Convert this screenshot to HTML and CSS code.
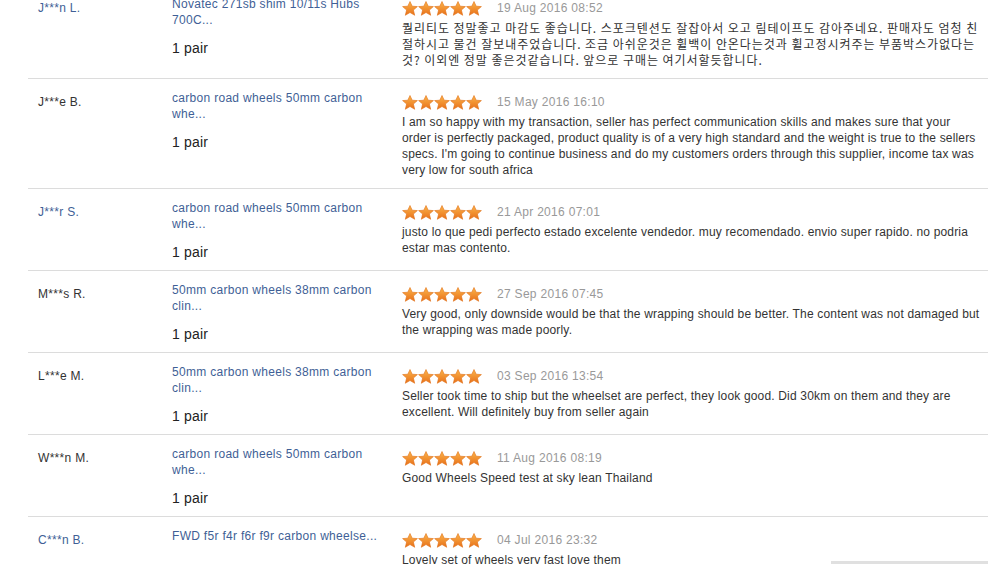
FILE: index.html
```html
<!DOCTYPE html>
<html>
<head>
<meta charset="utf-8">
<link rel="stylesheet" href="styles.css">
</head>
<body>
<svg width="0" height="0" class="defs">
  <defs>
    <linearGradient id="sg" x1="0" y1="0" x2="0" y2="1">
      <stop offset="0" stop-color="#fbb54a"/>
      <stop offset="1" stop-color="#e8701a"/>
    </linearGradient>
    <symbol id="star" viewBox="0 0 16 15">
      <polygon points="8,0.5 10.2,5.2 15.4,5.6 11.4,9 12.7,14.3 8,11.5 3.3,14.3 4.6,9 0.6,5.6 5.8,5.2" fill="url(#sg)" stroke="#e07018" stroke-width="0.6"/>
    </symbol>
  </defs>
</svg>
<div class="feedback">
  <div class="row first">
    <div class="buyer blue">J***n L.</div>
    <div class="product"><a class="plink">Novatec 271sb shim 10/11s Hubs 700C...</a><div class="qty">1 pair</div></div>
    <div class="review">
      <div class="meta"><span class="stars"><svg><use href="#star"/></svg><svg><use href="#star"/></svg><svg><use href="#star"/></svg><svg><use href="#star"/></svg><svg><use href="#star"/></svg></span><span class="date">19 Aug 2016 08:52</span></div>
      <p class="text ko">퀄리티도 정말좋고 마감도 좋습니다. 스포크텐션도 잘잡아서 오고 림테이프도 감아주네요. 판매자도 엄청 친절하시고 물건 잘보내주었습니다. 조금 아쉬운것은 휠백이 안온다는것과 휠고정시켜주는 부품박스가없다는것? 이외엔 정말 좋은것같습니다. 앞으로 구매는 여기서할듯합니다.</p>
    </div>
  </div>
  <div class="row">
    <div class="buyer">J***e B.</div>
    <div class="product"><a class="plink">carbon road wheels 50mm carbon whe...</a><div class="qty">1 pair</div></div>
    <div class="review">
      <div class="meta"><span class="stars"><svg><use href="#star"/></svg><svg><use href="#star"/></svg><svg><use href="#star"/></svg><svg><use href="#star"/></svg><svg><use href="#star"/></svg></span><span class="date">15 May 2016 16:10</span></div>
      <p class="text">I am so happy with my transaction, seller has perfect communication skills and makes sure that your order is perfectly packaged, product quality is of a very high standard and the weight is true to the sellers specs. I'm going to continue business and do my customers orders through this supplier, income tax was very low for south africa</p>
    </div>
  </div>
  <div class="row">
    <div class="buyer blue">J***r S.</div>
    <div class="product"><a class="plink">carbon road wheels 50mm carbon whe...</a><div class="qty">1 pair</div></div>
    <div class="review">
      <div class="meta"><span class="stars"><svg><use href="#star"/></svg><svg><use href="#star"/></svg><svg><use href="#star"/></svg><svg><use href="#star"/></svg><svg><use href="#star"/></svg></span><span class="date">21 Apr 2016 07:01</span></div>
      <p class="text">justo lo que pedi perfecto estado excelente vendedor. muy recomendado. envio super rapido. no podria estar mas contento.</p>
    </div>
  </div>
  <div class="row">
    <div class="buyer">M***s R.</div>
    <div class="product"><a class="plink">50mm carbon wheels 38mm carbon clin...</a><div class="qty">1 pair</div></div>
    <div class="review">
      <div class="meta"><span class="stars"><svg><use href="#star"/></svg><svg><use href="#star"/></svg><svg><use href="#star"/></svg><svg><use href="#star"/></svg><svg><use href="#star"/></svg></span><span class="date">27 Sep 2016 07:45</span></div>
      <p class="text">Very good, only downside would be that the wrapping should be better. The content was not damaged but the wrapping was made poorly.</p>
    </div>
  </div>
  <div class="row">
    <div class="buyer">L***e M.</div>
    <div class="product"><a class="plink">50mm carbon wheels 38mm carbon clin...</a><div class="qty">1 pair</div></div>
    <div class="review">
      <div class="meta"><span class="stars"><svg><use href="#star"/></svg><svg><use href="#star"/></svg><svg><use href="#star"/></svg><svg><use href="#star"/></svg><svg><use href="#star"/></svg></span><span class="date">03 Sep 2016 13:54</span></div>
      <p class="text">Seller took time to ship but the wheelset are perfect, they look good. Did 30km on them and they are excellent. Will definitely buy from seller again</p>
    </div>
  </div>
  <div class="row">
    <div class="buyer">W***n M.</div>
    <div class="product"><a class="plink">carbon road wheels 50mm carbon whe...</a><div class="qty">1 pair</div></div>
    <div class="review">
      <div class="meta"><span class="stars"><svg><use href="#star"/></svg><svg><use href="#star"/></svg><svg><use href="#star"/></svg><svg><use href="#star"/></svg><svg><use href="#star"/></svg></span><span class="date">11 Aug 2016 08:19</span></div>
      <p class="text">Good Wheels Speed test at sky lean Thailand</p>
    </div>
  </div>
  <div class="row">
    <div class="buyer blue">C***n B.</div>
    <div class="product"><a class="plink">FWD f5r f4r f6r f9r carbon wheelse...</a><div class="qty">1 pair</div></div>
    <div class="review">
      <div class="meta"><span class="stars"><svg><use href="#star"/></svg><svg><use href="#star"/></svg><svg><use href="#star"/></svg><svg><use href="#star"/></svg><svg><use href="#star"/></svg></span><span class="date">04 Jul 2016 23:32</span></div>
      <p class="text">Lovely set of wheels very fast love them</p>
    </div>
  </div>
</div>
<div class="floatbar"></div>
</body>
</html>
```
FILE: styles.css
```css
html, body {
  margin: 0;
  padding: 0;
  background: #fff;
  overflow: hidden;
}
body {
  width: 996px;
  height: 564px;
  position: relative;
  font-family: "Liberation Sans", Arial, "Noto Sans CJK KR", sans-serif;
  font-size: 12px;
  letter-spacing: 0.3px;
  color: #333;
}
.defs {
  position: absolute;
  width: 0;
  height: 0;
}
.feedback {
  margin: -15px 0 0 28px;
  width: 960px;
  height: 579px;
  overflow: hidden;
}
.row {
  display: flex;
  border-bottom: 1px solid #dcdcdc;
  padding-bottom: 9px;
}
.buyer {
  width: 134px;
  padding: 15px 0 0 10px;
  line-height: 16px;
  color: #333;
  box-sizing: border-box;
  flex: none;
}
.buyer.blue {
  color: #3f5f96;
}
.product {
  width: 240px;
  padding: 11px 0 0 10px;
  box-sizing: border-box;
  flex: none;
}
.plink {
  display: block;
  width: 208px;
  min-height: 32px;
  color: #3f5f96;
  line-height: 16px;
  text-decoration: none;
}
.qty {
  margin-top: 11px;
  font-size: 14px;
  line-height: 18px;
  letter-spacing: 0.2px;
  color: #222;
}
.review {
  width: 579px;
  padding-top: 15px;
  padding-bottom: 1px;
  flex: none;
}
.meta {
  display: flex;
  align-items: center;
  height: 16px;
}
.stars {
  display: flex;
  width: 95px;
}
.stars svg {
  width: 16px;
  height: 15px;
  display: block;
}
.date {
  color: #999;
  line-height: 16px;
}
.text {
  margin: 4px 0 0;
  line-height: 16px;
  letter-spacing: 0.17px;
  color: #333;
}
.text.ko {
  font-family: "Noto Sans CJK KR", "Liberation Sans", sans-serif;
  font-size: 12px;
  letter-spacing: 0.95px;
  line-height: 16px;
}
.floatbar {
  position: absolute;
  left: 831px;
  top: 561px;
  width: 157px;
  height: 4px;
  background: #e0e0e0;
}
```
